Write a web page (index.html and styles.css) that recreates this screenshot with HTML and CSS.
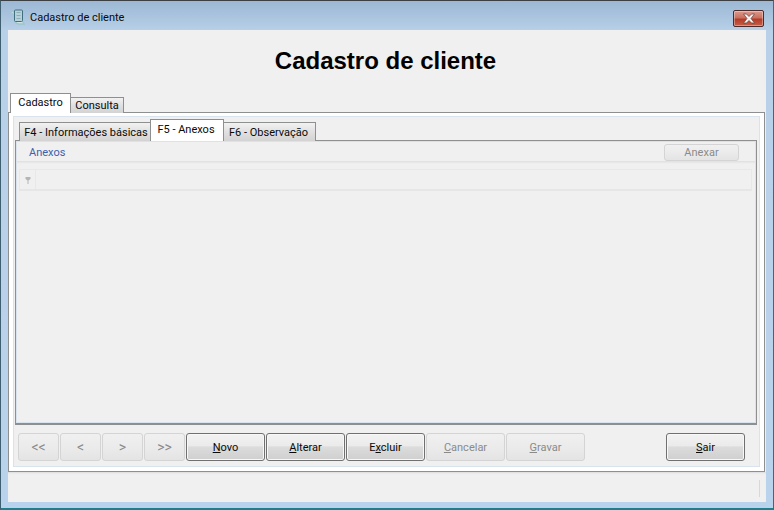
FILE: index.html
```html
<!DOCTYPE html>
<html lang="pt">
<head>
<meta charset="utf-8">
<title>Cadastro de cliente</title>
<link rel="stylesheet" href="styles.css">
</head>
<body>
<div class="window">
  <header class="titlebar">
    <svg class="app-icon" width="16" height="16" viewBox="0 0 16 16">
      <path d="M.5 2.500h3.500l1 9c.5 2 2 3.500 4 3.500h5l-1.500-3" fill="#cfe3e6" stroke="#9cc8c8" stroke-width="1.500"/>
      <rect x="4.500" y="1" width="8" height="11.500" rx="1" fill="#b8d0da" stroke="#3f6f7e"/>
      <path d="M6.500 3.500h4M6.500 6.500h4M6.500 9.500h4" stroke="#88aeb8"/>
    </svg>
    <span class="title-text">Cadastro de cliente</span>
    <div class="close-btn">
      <svg width="18" height="11" viewBox="0 0 18 11">
        <path d="M3.500 1h3L9 3.500 11.500 1h3L11 5.500l3.500 4.500h-3L9 7.500 6.500 10h-3L7 5.500z" fill="#f2f2f2" stroke="#6e3a34" stroke-width=".7"/>
      </svg>
    </div>
  </header>
  <div class="client">
    <h1 class="heading">Cadastro de cliente</h1>
    <div class="tabs outer-tabs">
      <div class="tab outer-active">Cadastro</div>
      <div class="tab outer-idle">Consulta</div>
    </div>
    <section class="outer-pane">
      <div class="outer-inner">
        <div class="tabs inner-tabs">
          <div class="tab inner-idle first-tab">F4 - Informações básicas</div>
          <div class="tab inner-active">F5 - Anexos</div>
          <div class="tab inner-idle last-tab">F6 - Observação</div>
        </div>
        <div class="inner-pane">
          <div class="inner-content">
            <div class="section-head">
              <span class="section-label">Anexos</span>
              <button class="btn btn-disabled btn-attach" disabled>Anexar</button>
            </div>
            <div class="grid-head">
              <div class="grid-indicator">
                <svg width="6" height="8" viewBox="0 0 6 8"><path d="M.5 1h5v2L3.500 4.500V8h-1V4.500L.5 3z" fill="#b5b5b5"/></svg>
              </div>
              <div class="grid-cell"></div>
            </div>
            <div class="grid-body"></div>
          </div>
        </div>
        <div class="actions">
          <button class="btn btn-disabled btn-nav" disabled>&lt;&lt;</button>
          <button class="btn btn-disabled btn-nav" disabled>&lt;</button>
          <button class="btn btn-disabled btn-nav" disabled>&gt;</button>
          <button class="btn btn-disabled btn-nav" disabled>&gt;&gt;</button>
          <button class="btn btn-main"><u>N</u>ovo</button>
          <button class="btn btn-main"><u>A</u>lterar</button>
          <button class="btn btn-main">E<u>x</u>cluir</button>
          <button class="btn btn-main btn-disabled" disabled><u>C</u>ancelar</button>
          <button class="btn btn-main btn-disabled" disabled><u>G</u>ravar</button>
          <button class="btn btn-main btn-exit"><u>S</u>air</button>
        </div>
      </div>
    </section>
    <footer class="statusbar"><span class="status-sep"></span></footer>
  </div>
</div>
</body>
</html>
```
FILE: styles.css
```css
* { box-sizing: border-box; }
html, body { margin: 0; padding: 0; }
body {
  width: 774px;
  height: 510px;
  overflow: hidden;
  font-family: Roboto, "Noto Sans", sans-serif;
  font-size: 11px;
  color: #0a0a0a;
}
.window {
  width: 774px;
  height: 510px;
  display: flex;
  flex-direction: column;
  padding: 0 7px 6px;
  border-top: 1px solid #3c4043;
  border-left: 1px solid #3f5f70;
  border-right: 1px solid #2f6f80;
  border-bottom: 2px solid #1f7f8c;
  background: linear-gradient(to bottom, #9cb8d4 0, #b8d0e8 30px, #bad3ec 100%);
}
.titlebar {
  height: 29px;
  flex: none;
  display: flex;
  align-items: center;
  margin: 0 -7px;
  padding: 0 9px;
}
.app-icon { flex: none; margin-right: 4px; margin-top: 3px; }
.title-text { flex: 1; margin-top: 4px; white-space: nowrap; }
.close-btn {
  width: 31px;
  height: 17px;
  border: 1px solid #4c2a2a;
  border-radius: 2px;
  background: linear-gradient(to bottom, #dc9a8e 0, #c9705f 45%, #b63b28 55%, #c4604a 100%);
  box-shadow: inset 0 0 0 1px rgba(255,255,255,.35);
  display: flex;
  align-items: center;
  justify-content: center;
  margin-top: 5px;
}
.client {
  flex: 1;
  min-height: 0;
  display: flex;
  flex-direction: column;
  background: #f0f0f0;
}
.heading {
  margin: 0;
  height: 63px;
  flex: none;
  text-align: center;
  font-family: "Liberation Sans", Arial, sans-serif;
  font-size: 24px;
  font-weight: 700;
  color: #000;
  line-height: 61px;
  padding-right: 3px;
}
.tabs { display: flex; align-items: flex-end; flex: none; position: relative; z-index: 1; }
.outer-tabs { height: 20px; padding-left: 2px; margin-bottom: -1px; }
.tab {
  display: flex;
  align-items: center;
  justify-content: center;
  border: 1px solid #8e8f8f;
  border-bottom: 0;
  white-space: nowrap;
}
.outer-active { width: 61px; height: 20px; background: #fff; padding-bottom: 2px; }
.outer-idle {
  width: 53px;
  height: 16px;
  background: linear-gradient(to bottom, #f2f2f2, #e0e0e0 50%, #d3d3d3);
  border-left: 0;
}
.outer-pane {
  flex: none;
  height: 360px;
  margin-right: 1px;
  border: 1px solid #8e8f8f;
  background: #fff;
  padding: 3px 4px 4px;
}
.outer-inner {
  height: 100%;
  border: 1px solid #d9e3ee;
  background: #f0f0f0;
  padding: 2px 2px 0 1px;
  display: flex;
  flex-direction: column;
}
.inner-tabs { height: 22px; padding-left: 4px; margin-bottom: -1px; }
.first-tab { width: 131px; height: 19px; border-right: 0; padding-left: 2px; }
.last-tab { width: 92px; height: 19px; border-left: 0; padding-right: 2px; }
.inner-idle { background: linear-gradient(to bottom, #f2f2f2, #e0e0e0 50%, #d3d3d3); }
.inner-active { width: 74px; height: 22px; background: #fff; padding: 0 2px 3px 0; }
.inner-pane {
  flex: none;
  height: 285px;
  border: 1px solid #8e8f8f;
  border-bottom: 2px solid #8e8f8f;
  background: #fff;
}
.inner-content {
  height: 100%;
  border: 1px solid #d9e3ee;
  background: #f0f0f0;
  display: flex;
  flex-direction: column;
}
.section-head {
  height: 20px;
  flex: none;
  display: flex;
  align-items: center;
  justify-content: space-between;
  padding: 3px 16px 0 12px;
  border-bottom: 1px solid #e2e2e2;
  box-shadow: 0 1px 1px #e8e8e8;
}
.section-label { color: #3b62ad; margin-top: -2px; }
.grid-head {
  height: 22px;
  flex: none;
  margin: 7px 3px 0 2px;
  display: flex;
  border: 1px solid #e8e8e8;
  border-bottom: 2px solid #e6e6e6;
  background: #f0f0f0;
}
.grid-indicator {
  width: 16px;
  border-right: 1px solid #e8e8e8;
  display: flex;
  align-items: center;
  justify-content: center;
}
.grid-cell { flex: 1; }
.grid-body { flex: 1; }
.actions {
  flex: 1;
  display: flex;
  align-items: flex-start;
  gap: 1px;
  padding: 8px 12px 0 3px;
}
.btn {
  height: 28px;
  margin: 0;
  padding: 0;
  font-family: inherit;
  font-size: 11px;
  color: #0a0a0a;
  border: 1px solid #707070;
  border-radius: 3px;
  background: linear-gradient(to bottom, #f2f2f2 0, #ebebeb 45%, #dcdcdc 50%, #cfcfcf 100%);
  box-shadow: inset 0 0 0 1px #f8f8f8;
}
.btn-main { width: 79px; }
.btn-nav { width: 41px; font-size: 14px; }
.btn-disabled {
  color: #8a8a8a;
  border-color: #d4d4d4;
  background: linear-gradient(to bottom, #f0f0f0, #ebebeb 50%, #e4e4e4);
  box-shadow: none;
}
.btn-attach { width: 75px; height: 17px; line-height: 14px; margin-top: -1px; }
.btn-exit { margin-left: auto; }
.statusbar {
  flex: 1;
  display: flex;
  justify-content: flex-end;
  padding: 8px 6px 5px 0;
  box-shadow: inset 0 2px 2px -1px #dcdcdc;
}
.status-sep { width: 1px; background: #d8d8d8; }
```
